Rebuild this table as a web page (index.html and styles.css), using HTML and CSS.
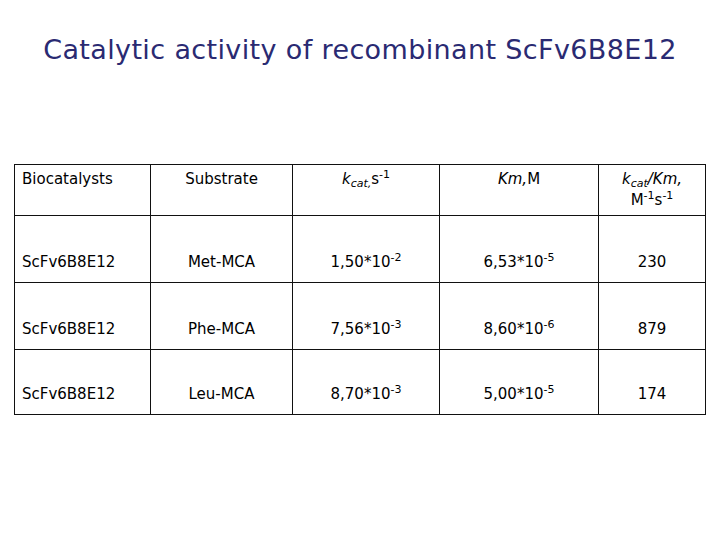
FILE: index.html
```html
<!DOCTYPE html>
<html>
<head>
<meta charset="utf-8">
<link rel="stylesheet" href="styles.css">
</head>
<body>
<h1 class="title">Catalytic activity of recombinant ScFv6B8E12</h1>
<table class="data">
  <colgroup>
    <col class="c1"><col class="c2"><col class="c3"><col class="c4"><col class="c5">
  </colgroup>
  <tr class="head">
    <td class="left">Biocatalysts</td>
    <td>Substrate</td>
    <td><i>k<sub>cat,</sub></i>s<sup>-1</sup></td>
    <td><i>Km,</i>M</td>
    <td class="two"><i>k<sub>cat</sub>/Km,</i><br>M<sup>-1</sup>s<sup>-1</sup></td>
  </tr>
  <tr class="row">
    <td class="left">ScFv6B8E12</td>
    <td>Met-MCA</td>
    <td>1,50*10<sup>-2</sup></td>
    <td>6,53*10<sup>-5</sup></td>
    <td>230</td>
  </tr>
  <tr class="row">
    <td class="left">ScFv6B8E12</td>
    <td>Phe-MCA</td>
    <td>7,56*10<sup>-3</sup></td>
    <td>8,60*10<sup>-6</sup></td>
    <td>879</td>
  </tr>
  <tr class="row last">
    <td class="left">ScFv6B8E12</td>
    <td>Leu-MCA</td>
    <td>8,70*10<sup>-3</sup></td>
    <td>5,00*10<sup>-5</sup></td>
    <td>174</td>
  </tr>
</table>
</body>
</html>
```
FILE: styles.css
```css
html, body {
  margin: 0;
  padding: 0;
  background: #ffffff;
}
body {
  width: 720px;
  height: 540px;
  font-family: "DejaVu Sans", Verdana, sans-serif;
  color: #000;
}
.title {
  margin: 0;
  padding-top: 35px;
  height: 30px;
  line-height: 30px;
  font-size: 27px;
  font-weight: normal;
  text-align: center;
  color: #2a2a72;
  letter-spacing: 0.37px;
}
.data {
  margin: 99px 0 0 14px;
  border-collapse: collapse;
  table-layout: fixed;
  width: 691px;
  font-size: 15px;
  line-height: 19px;
}
.c1 { width: 136px; }
.c2 { width: 142px; }
.c3 { width: 147px; }
.c4 { width: 159px; }
.c5 { width: 107px; }
.data td {
  border: 1px solid #111;
  text-align: center;
  padding: 0 6px;
}
.data td.left {
  text-align: left;
  padding-left: 7px;
}
.head td {
  height: 45px;
  vertical-align: top;
  padding-top: 5px;
}
.head td.two {
  line-height: 21px;
  padding-top: 4px;
}
.row td {
  height: 56px;
  vertical-align: bottom;
  padding-bottom: 10px;
}
.row.last td {
  height: 54px;
}
sup {
  font-size: 11px;
  line-height: 0;
  vertical-align: 6px;
}
sub {
  font-size: 11px;
  line-height: 0;
  vertical-align: -3px;
}
```
